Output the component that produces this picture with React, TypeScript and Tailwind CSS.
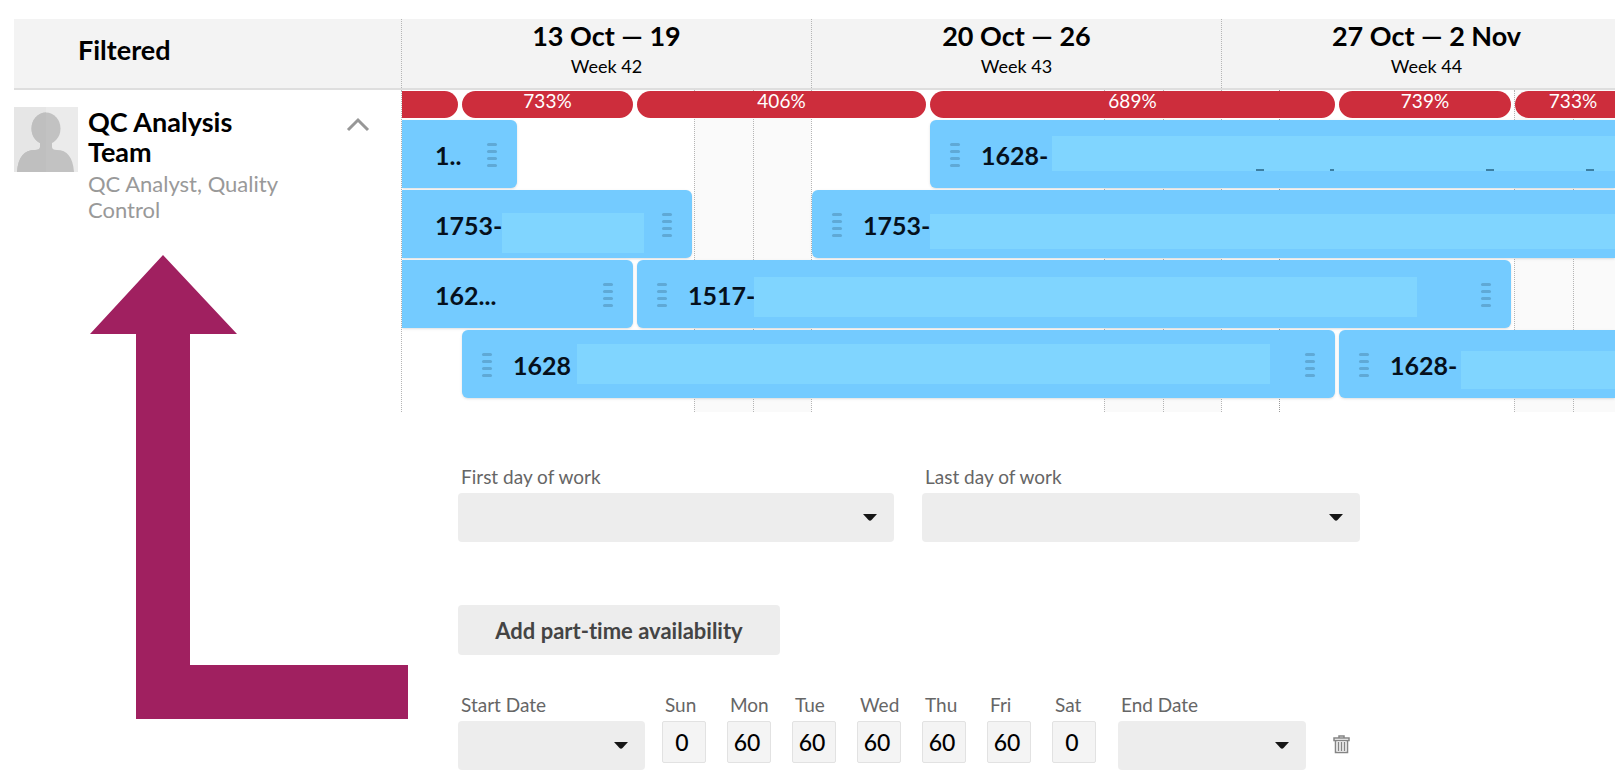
import React from 'react';
import clsx from 'clsx';

interface Booking {
  label: string;
  bar: string;
  text: string;
  mask?: string;
  startHandle?: boolean;
  endHandle?: boolean;
  marks?: boolean;
}

const WEEKS = [
  { range: '13 Oct — 19', week: 'Week 42' },
  { range: '20 Oct — 26', week: 'Week 43' },
  { range: '27 Oct — 2 Nov', week: 'Week 44' },
];

const LOADS = [
  { value: '', bar: 'w-[56px] rounded-r-full' },
  { value: '733%', bar: 'w-[171px] rounded-full' },
  { value: '406%', bar: 'w-[289px] rounded-full' },
  { value: '689%', bar: 'w-[405px] rounded-full' },
  { value: '739%', bar: 'w-[172px] rounded-full' },
  { value: '733%', bar: 'w-[116px] rounded-full' },
];

const ROWS: Booking[][] = [
  [
    { label: '1..', bar: 'w-[115px] rounded-r-md', text: 'ml-[33px] flex-1', endHandle: true },
    { label: '1628-', bar: 'ml-[413px] flex-1 rounded-l-md', text: 'w-[71px]', mask: 'mt-[14px] h-[35px]', startHandle: true, marks: true },
  ],
  [
    { label: '1753-', bar: 'w-[290px] rounded-r-md', text: 'ml-[33px] w-[67px]', mask: 'mt-[21px] mr-[18px] h-[40px]', endHandle: true },
    { label: '1753-', bar: 'ml-[120px] flex-1 rounded-l-md', text: 'w-[67px]', mask: 'mt-[22px] h-[35px]', startHandle: true },
  ],
  [
    { label: '162...', bar: 'w-[231px] rounded-r-md', text: 'ml-[33px] flex-1', endHandle: true },
    { label: '1517-', bar: 'ml-1 w-[874px] rounded-md', text: 'w-[66px]', mask: 'mt-[15px] mr-[64px] h-[40px]', startHandle: true, endHandle: true },
  ],
  [
    { label: '1628', bar: 'ml-[60px] w-[873px] rounded-md', text: 'w-[64px]', mask: 'mt-[12px] mr-[35px] h-[40px]', startHandle: true, endHandle: true },
    { label: '1628-', bar: 'ml-1 flex-1 rounded-l-md', text: 'w-[71px]', mask: 'mt-[19px] h-[38px]', startHandle: true },
  ],
];

const DAYS = [
  { name: 'Sun', value: '0' },
  { name: 'Mon', value: '60' },
  { name: 'Tue', value: '60' },
  { name: 'Wed', value: '60' },
  { name: 'Thu', value: '60' },
  { name: 'Fri', value: '60' },
  { name: 'Sat', value: '0' },
];

const Handle: React.FC<{ className: string }> = ({ className }) => (
  <span className={clsx('flex flex-col gap-1 w-2.5 shrink-0', className)}>
    <span className="h-[3px] rounded-full bg-[#5fa9d6]" />
    <span className="h-[3px] rounded-full bg-[#5fa9d6]" />
    <span className="h-[3px] rounded-full bg-[#5fa9d6]" />
    <span className="h-[3px] rounded-full bg-[#5fa9d6]" />
  </span>
);

const BookingBar: React.FC<{ booking: Booking }> = ({ booking }) => (
  <div className={clsx('flex items-center h-[68px] shrink-0 overflow-hidden pt-0.5 bg-[#74cbff] shadow-sm', booking.bar)}>
    {booking.startHandle && <Handle className="ml-5 mr-[21px]" />}
    <span className={clsx('shrink-0 whitespace-nowrap text-[25px] leading-8 font-bold text-[#06101c]', booking.text)}>
      {booking.label}
    </span>
    {booking.mask && (
      <span className={clsx('flex flex-1 items-end self-start bg-[#80d5ff]', booking.mask)}>
        {booking.marks && (
          <>
            <span className="ml-[204px] w-2 h-0.5 bg-[#3d7fa3]" />
            <span className="ml-[66px] w-1 h-0.5 bg-[#3d7fa3]" />
            <span className="ml-[152px] w-2 h-0.5 bg-[#3d7fa3]" />
            <span className="ml-[92px] w-2 h-0.5 bg-[#3d7fa3]" />
          </>
        )}
      </span>
    )}
    {booking.endHandle && <Handle className="mr-5" />}
  </div>
);

const DateSelect: React.FC<{ id: string; label: string; className: string }> = ({ id, label, className }) => (
  <div className={clsx('flex flex-col', className)}>
    <label htmlFor={id} className="pl-[3px] pb-1 text-[19px] leading-6 text-[#666]">{label}</label>
    <div className="grid items-center">
      <select id={id} className="col-start-1 row-start-1 appearance-none w-full h-[49px] rounded bg-[#ededed]" />
      <svg className="col-start-1 row-start-1 justify-self-end mr-[17px] pointer-events-none" width="14" height="7" viewBox="0 0 14 7">
        <path d="M0 0h14L8.500 6Q7 7.500 5.500 6z" fill="#161616" />
      </svg>
    </div>
  </div>
);

const Person: React.FC = () => (
  <div className="flex items-start h-[128px] pt-[17px]">
    <svg className="shrink-0" width="64" height="65" viewBox="0 0 64 65">
      <path d="M0 0h64v65H0z" fill="#ebebeb" />
      <path d="M0 0h32v65H0z" fill="#e6e6e6" />
      <g fill="#c2c2c2">
        <ellipse cx="32" cy="21.500" rx="14.500" ry="16" />
        <path d="M26 33v7q0 3-5 3C10 43 4 50 3 65h57C59 50 53 43 43 43q-5 0-5-3v-7z" />
      </g>
      <path d="M32 5.500v59.500H3C4 50 10 43 21 43q5 0 5-3v-4c-5-2-8.500-8-8.500-14.500C17.500 12.500 24 5.500 32 5.500z" fill="#bfbfbf" />
    </svg>
    <div className="ml-2.5 w-[220px]">
      <h3 className="w-[180px] text-[27px] leading-[30px] font-bold text-black">QC Analysis Team</h3>
      <p className="pt-1 text-[22px] leading-[26px] text-[#999]">QC Analyst, Quality Control</p>
    </div>
    <button type="button" aria-label="Collapse team" className="mt-2.5 ml-[38px]">
      <svg width="24" height="15" viewBox="0 0 24 15" fill="none" stroke="#979797" strokeWidth="3">
        <path d="M2 13 12 3l10 10" />
      </svg>
    </button>
  </div>
);

const Sidebar: React.FC = () => (
  <aside className="w-[387px] shrink-0">
    <div className="flex items-center h-[71px] pl-16 pb-2 bg-[#f3f3f3] border-b-2 border-[#dedede]">
      <h2 className="text-[27px] leading-8 font-bold text-black">Filtered</h2>
    </div>
    <Person />
    <svg className="mt-[37px] ml-[76px] max-w-none" width="318" height="464" viewBox="0 0 318 464">
      <path d="M73 0 147 79H100V410H318V464H46V79H0z" fill="#a02060" />
    </svg>
  </aside>
);

const Timeline: React.FC = () => (
  <section className="overflow-hidden">
    <div className="flex h-[71px] bg-[#f3f3f3] border-b-2 border-[#dedede]">
      {WEEKS.map((w) => (
        <div key={w.week} className="w-[410px] shrink-0 border-l border-dotted border-[#b5b5b5] text-center text-black">
          <div className="text-[27px] leading-[33px] font-bold">{w.range}</div>
          <div className="text-lg leading-7">{w.week}</div>
        </div>
      ))}
    </div>

    <div className="grid grid-cols-1">
      <div className="flex col-start-1 row-start-1 min-w-0 overflow-hidden">
        {WEEKS.map((w, i) => (
          <div key={w.week} className="flex w-[410px] shrink-0 border-l border-dotted border-[#b5b5b5]">
            <div className={clsx('w-[58px]', i === 2 && 'border-r border-dotted border-[#999]')} />
            <div className="flex-1" />
            <div className="w-[59px] bg-[#fafafa] border-l border-dotted border-[#b5b5b5]" />
            <div className="w-[58px] bg-[#fafafa] border-l border-dotted border-[#b5b5b5]" />
          </div>
        ))}
      </div>

      <div className="flex flex-col gap-0.5 col-start-1 row-start-1 min-w-0 overflow-hidden pt-px pb-3.5 pl-px">
        <div className="flex gap-1">
          {LOADS.map((load, i) => (
            <div key={i} className={clsx('h-[27px] shrink-0 bg-[#cd2d3c] text-center text-[19px] leading-5 text-white', load.bar)}>
              {load.value}
            </div>
          ))}
        </div>
        {ROWS.map((row, i) => (
          <div key={i} className="flex">
            {row.map((booking, j) => (
              <BookingBar key={j} booking={booking} />
            ))}
          </div>
        ))}
      </div>
    </div>
  </section>
);

const Availability: React.FC = () => (
  <form className="pl-[57px] pt-[53px]">
    <div className="flex gap-7">
      <DateSelect id="first-day" label="First day of work" className="w-[436px]" />
      <DateSelect id="last-day" label="Last day of work" className="w-[438px]" />
    </div>

    <button
      type="button"
      className="mt-[63px] w-[322px] h-[50px] rounded bg-[#ededed] text-[22px] font-bold text-[#444] [font-variant-ligatures:none]"
    >
      Add part-time availability
    </button>

    <div className="flex items-start mt-[38px]">
      <DateSelect id="start-date" label="Start Date" className="w-[187px]" />
      <div className="flex gap-[21px] ml-[17px] mr-[22px]">
        {DAYS.map((day) => (
          <div key={day.name} className="flex flex-col w-11">
            <label htmlFor={day.name} className="pl-[3px] pb-1 text-[19px] leading-6 text-[#666]">{day.name}</label>
            <input
              id={day.name}
              defaultValue={day.value}
              className="w-full h-[42px] rounded-xs border border-[#e2e2e2] bg-[#f4f4f4] pr-1 text-center text-[23px] font-medium text-black"
            />
          </div>
        ))}
      </div>
      <DateSelect id="end-date" label="End Date" className="w-[188px]" />
      <button type="button" aria-label="Delete availability" className="mt-[42px] ml-[27px]">
        <svg width="17" height="19" viewBox="0 0 17 19" fill="none" stroke="#858585">
          <path d="M6 2.500V1h5v1.500M1 5.500v-2.500h15v2.500z" strokeWidth="1.500" />
          <path d="M2.500 6v11.500h12V6" strokeWidth="1.500" />
          <path d="M5.500 7v9M8.500 7v9M11.500 7v9" strokeWidth="1.500" />
        </svg>
      </button>
    </div>
  </form>
);

export default function App() {
  return (
    <main className="flex pl-3.5 pt-[19px] bg-white font-[Lato,'Open_Sans',sans-serif] overflow-hidden">
      <Sidebar />
      <div className="flex-1 min-w-0">
        <Timeline />
        <Availability />
      </div>
    </main>
  );
}
